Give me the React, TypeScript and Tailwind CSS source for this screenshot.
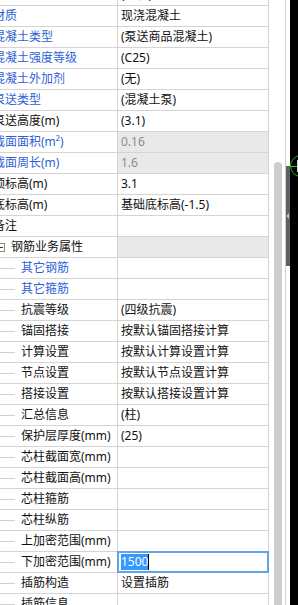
type Row = {
  label: string;
  value?: string;
  kind?: "top" | "group" | "child";
  blue?: boolean;
  grey?: boolean;
  editing?: boolean;
};

const rows: Row[] = [
  { label: "柱类型", value: "(中柱)" },
  { label: "材质", value: "现浇混凝土", blue: true },
  { label: "混凝土类型", value: "(泵送商品混凝土)", blue: true },
  { label: "混凝土强度等级", value: "(C25)", blue: true },
  { label: "混凝土外加剂", value: "(无)", blue: true },
  { label: "泵送类型", value: "(混凝土泵)", blue: true },
  { label: "泵送高度(m)", value: "(3.1)" },
  { label: "截面面积(m²)", value: "0.16", blue: true, grey: true },
  { label: "截面周长(m)", value: "1.6", blue: true, grey: true },
  { label: "顶标高(m)", value: "3.1" },
  { label: "底标高(m)", value: "基础底标高(-1.5)" },
  { label: "备注" },
  { label: "钢筋业务属性", kind: "group", grey: true },
  { label: "其它钢筋", kind: "child", blue: true },
  { label: "其它箍筋", kind: "child", blue: true },
  { label: "抗震等级", value: "(四级抗震)", kind: "child" },
  { label: "锚固搭接", value: "按默认锚固搭接计算", kind: "child" },
  { label: "计算设置", value: "按默认计算设置计算", kind: "child" },
  { label: "节点设置", value: "按默认节点设置计算", kind: "child" },
  { label: "搭接设置", value: "按默认搭接设置计算", kind: "child" },
  { label: "汇总信息", value: "(柱)", kind: "child" },
  { label: "保护层厚度(mm)", value: "(25)", kind: "child" },
  { label: "芯柱截面宽(mm)", kind: "child" },
  { label: "芯柱截面高(mm)", kind: "child" },
  { label: "芯柱箍筋", kind: "child" },
  { label: "芯柱纵筋", kind: "child" },
  { label: "上加密范围(mm)", kind: "child" },
  { label: "下加密范围(mm)", value: "1500", kind: "child", editing: true },
  { label: "插筋构造", value: "设置插筋", kind: "child" },
  { label: "插筋信息", kind: "child" },
];

function Label({ row }: { row: Row }) {
  const color = row.blue ? "text-[#2f5fd6]" : "text-[#111]";
  if (row.kind === "group") {
    return (
      <div className="flex items-center">
        <div className="-ml-[4px] flex h-[9px] w-[9px] items-center justify-center border border-[#8a8a8a] bg-white">
          <div className="h-px w-[5px] bg-[#333]" />
        </div>
        <span className={`ml-[6px] whitespace-nowrap ${color}`}>{row.label}</span>
      </div>
    );
  }
  if (row.kind === "child") {
    return (
      <div className="flex items-center">
        <div className="h-px w-[15px] bg-[#cfcfcf]" />
        <span className={`ml-[6px] whitespace-nowrap ${color}`}>{row.label}</span>
      </div>
    );
  }
  return <span className={`-ml-[7px] whitespace-nowrap ${color}`}>{row.label}</span>;
}

function Value({ row }: { row: Row }) {
  if (row.editing) {
    return (
      <div className="absolute -top-px -bottom-px -left-px -right-px flex items-center border-2 border-[#62a3e8] bg-white pl-[2px]">
        <span className="bg-[#3399ff] leading-[16px] text-white">{row.value}</span>
        <span className="h-[16px] w-px bg-black" />
      </div>
    );
  }
  return (
    <span className={`whitespace-nowrap pl-[3px] ${row.grey ? "text-[#8c8c8c]" : "text-[#111]"}`}>
      {row.value}
    </span>
  );
}

export default function App() {
  return (
    <div className="flex h-[605px] w-[298px] overflow-hidden bg-white font-['Noto_Sans','Noto_Sans_CJK_SC',sans-serif] text-[12px]">
      <div className="w-[269px] overflow-hidden">
        <div className="-mt-[15px]">
          {rows.map((row, i) => (
            <div key={i} className="flex h-[21px] border-b border-[#d4d4d4]">
              <div className="flex w-[118px] items-center overflow-hidden border-r border-[#d4d4d4]">
                <Label row={row} />
              </div>
              <div
                className={`relative flex w-[151px] items-center border-r border-[#d4d4d4] ${
                  row.grey ? "bg-[#e9e9e9]" : ""
                }`}
              >
                <Value row={row} />
              </div>
            </div>
          ))}
        </div>
      </div>

      <div className="flex w-[16px] flex-col">
        <div className="h-[162px]" />
        <div className="ml-[5px] w-[8px] flex-1 rounded-t-[4px] bg-[#cdcdcd]" />
      </div>

      <div className="w-px bg-[#d0d0d0]" />

      <div className="flex w-[4px] flex-col">
        <div className="h-[166px]" />
        <div className="flex h-[100px] flex-col bg-[#5a626c]">
          <div className="h-[46px]" />
          <svg width="4" height="8" viewBox="0 0 4 8">
            <polygon points="3,1 0.5,4 3,7" fill="#c6cad0" />
          </svg>
        </div>
      </div>

      <div className="flex w-[8px] flex-col bg-black">
        <div className="h-[151px]" />
        <svg width="8" height="30" viewBox="0 0 8 30">
          <circle cx="11" cy="15" r="10.5" fill="none" stroke="#19b219" strokeWidth="1" />
          <line x1="0" y1="15.5" x2="7" y2="15.5" stroke="#2ecc2e" strokeWidth="1" />
          <rect x="7" y="9" width="1" height="12" fill="#d8d8d8" />
        </svg>
      </div>
    </div>
  );
}
